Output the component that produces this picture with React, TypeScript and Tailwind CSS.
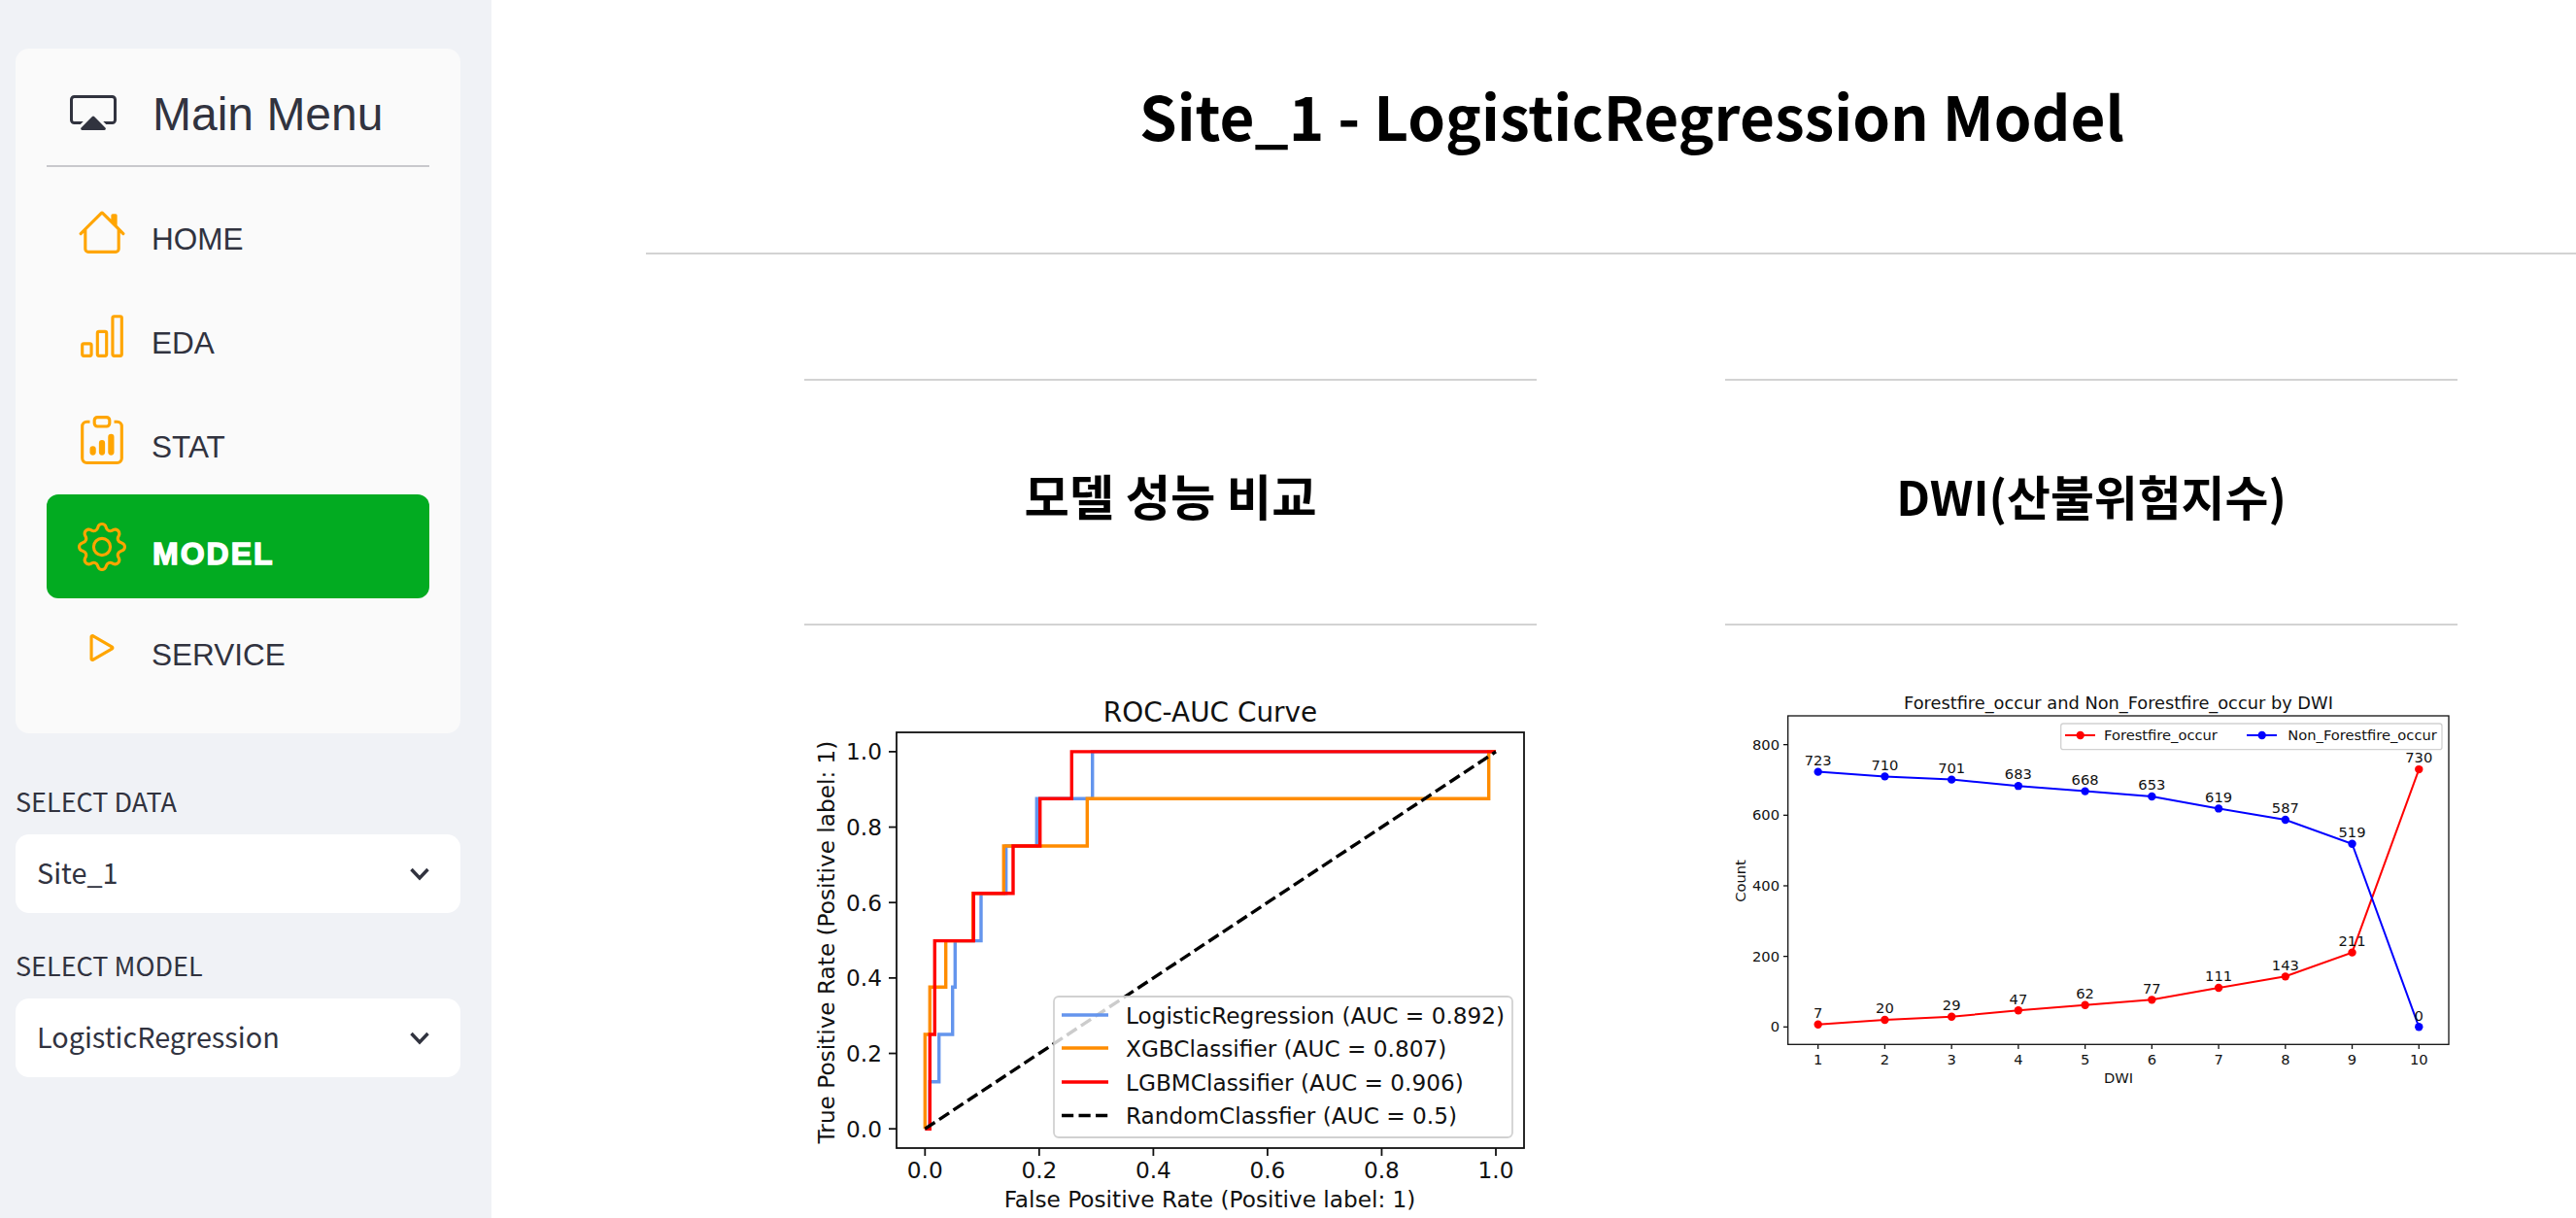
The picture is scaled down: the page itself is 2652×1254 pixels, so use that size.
import React from "react";
import { BsBarChart, BsCast, BsClipboardData, BsGear, BsHouse, BsPlay } from "react-icons/bs";

const rows = [
  { label: "HOME", Icon: BsHouse },
  { label: "EDA", Icon: BsBarChart },
  { label: "STAT", Icon: BsClipboardData },
  { label: "MODEL", Icon: BsGear, active: true },
  { label: "SERVICE", Icon: BsPlay },
];

function NavRow({ label, Icon, active }: { label: string; Icon: any; active?: boolean }) {
  return (
    <div className={active ? "flex h-[107px] gap-[26px] rounded-[12px] bg-[#02ab21] pl-[32px]" : "flex h-[107px] gap-[26px] pl-[32px]"}>
      <Icon className={active ? "mt-[29px] size-[50px] shrink-0 text-[#ffa500]" : "mt-[26px] size-[50px] shrink-0 text-[#ffa500]"} />
      {active ? (
        <span className="mt-[43px] ml-[1px] text-[32px] leading-[37px] font-bold tracking-[2px] text-white [-webkit-text-stroke:1.4px_white]">{label}</span>
      ) : (
        <span className="mt-[40px] text-[31.5px] leading-[37px] text-[#31333f]">{label}</span>
      )}
    </div>
  );
}

function SelectBox({ label, value }: { label: string; value: string }) {
  return (
    <div>
      <div className="mb-[16px] h-[36px] text-[27px] leading-[36px] text-[#31333f]">{label}</div>
      <div className="flex h-[81px] items-center justify-between rounded-[14px] bg-white pr-[32px] pl-[22px]">
        <span className="pb-[4px] text-[28.8px] text-[#31333f]">{value}</span>
        <svg viewBox="0 0 20 14" className="h-[14px] w-[20px]" fill="none" stroke="#31333f" strokeWidth="3.4">
          <polyline points="1.5,2 10,11 18.5,2" />
        </svg>
      </div>
    </div>
  );
}

const zx = (p: number) => 830 + p / 3;
const zy = (p: number) => 700 + p / 2.83;
const pts = (a: number[][]) => a.map(([x, y]) => `${zx(x).toFixed(1)},${zy(y).toFixed(1)}`).join(" ");

const blue = [[367,1308],[382,1308],[382,1171],[410,1171],[410,1033],[452,1033],[452,895],[460,895],[460,760],[540,760],[540,622],[617,622],[617,484],[712,484],[712,346],[884,346],[884,209],[2130,209]];
const orange = [[367,1308],[367,1033],[382,1033],[382,895],[431,895],[431,760],[515,760],[515,622],[610,622],[610,484],[868,484],[868,346],[2108,346],[2108,209],[2130,209]];
const red = [[367,1308],[382,1308],[382,1033],[397,1033],[397,760],[517,760],[517,622],[639,622],[639,484],[722,484],[722,346],[820,346],[820,209],[2130,209]];

function RocChart() {
  const xt = [0, 0.2, 0.4, 0.6, 0.8, 1];
  const X = (v: number) => 952.3 + 587.7 * v;
  const Y = (v: number) => 1162.2 - 388.3 * v;
  const legend = [
    ["#6495ed", "LogisticRegression (AUC = 0.892)", 1045],
    ["#ff8c00", "XGBClassifier (AUC = 0.807)", 1079],
    ["#ff0000", "LGBMClassifier (AUC = 0.906)", 1114],
    ["#000000", "RandomClassfier (AUC = 0.5)", 1148.5],
  ] as [string, string, number][];
  return (
    <svg viewBox="828 700 754 554" className="h-[554px] w-[754px] font-['DejaVu_Sans',sans-serif]" fill="#111">
      <text x="1246" y="743" fontSize="27.9" textAnchor="middle">ROC-AUC Curve</text>
      <polyline points={pts(blue)} fill="none" stroke="#6495ed" strokeWidth="3.4" />
      <polyline points={pts(orange)} fill="none" stroke="#ff8c00" strokeWidth="3.4" />
      <polyline points={pts(red)} fill="none" stroke="#ff0000" strokeWidth="3.4" />
      <line x1={X(0)} y1={Y(0)} x2={X(1)} y2={Y(1)} stroke="#000" strokeWidth="3.4" strokeDasharray="12.2 5.3" />
      <rect x="923" y="754" width="646" height="428" fill="none" stroke="#111" strokeWidth="1.8" />
      {xt.map((v) => (
        <g key={v}>
          <line x1={X(v)} x2={X(v)} y1="1182" y2="1190" stroke="#111" strokeWidth="1.8" />
          <text x={X(v)} y="1213" fontSize="23.2" textAnchor="middle">{v.toFixed(1)}</text>
          <line x1="915" x2="923" y1={Y(v)} y2={Y(v)} stroke="#111" strokeWidth="1.8" />
          <text x="908" y={Y(v) + 8.5} fontSize="23.2" textAnchor="end">{v.toFixed(1)}</text>
        </g>
      ))}
      <rect x="1085" y="1026" width="472" height="145" rx="5" fill="#ffffff" fillOpacity="0.8" stroke="#cccccc" strokeOpacity="0.9" strokeWidth="1.8" />
      {legend.map(([c, t, y]) => (
        <g key={t}>
          <line x1="1093" x2="1141" y1={y} y2={y} stroke={c} strokeWidth="3.4" strokeDasharray={c === "#000000" ? "12.2 5.3" : undefined} />
          <text x="1159" y={y + 8.5} fontSize="23.2">{t}</text>
        </g>
      ))}
      <text x="1245.5" y="1243" fontSize="23.2" textAnchor="middle">False Positive Rate (Positive label: 1)</text>
      <text transform="translate(859 970) rotate(-90)" fontSize="23.2" textAnchor="middle">True Positive Rate (Positive label: 1)</text>
    </svg>
  );
}

const redData = [7, 20, 29, 47, 62, 77, 111, 143, 211, 730];
const blueData = [723, 710, 701, 683, 668, 653, 619, 587, 519, 0];

function DwiChart() {
  const X = (d: number) => 1871.7 + 68.73 * (d - 1);
  const Y = (v: number) => 1057.3 - 0.3633 * v;
  const line = (a: number[]) => a.map((v, i) => `${X(i + 1).toFixed(1)},${Y(v).toFixed(1)}`).join(" ");
  return (
    <svg viewBox="1776 700 754 554" className="h-[554px] w-[754px] font-['DejaVu_Sans',sans-serif]" fill="#111">
      <text x="2181" y="730" fontSize="17.8" textAnchor="middle">Forestfire_occur and Non_Forestfire_occur by DWI</text>
      <rect x="1840.7" y="737" width="680.3" height="338.3" fill="none" stroke="#111" strokeWidth="1.3" />
      {[0, 200, 400, 600, 800].map((v) => (
        <g key={v}>
          <line x1="1836" x2="1840.7" y1={Y(v)} y2={Y(v)} stroke="#111" strokeWidth="1.3" />
          <text x="1832" y={Y(v) + 5} fontSize="14.7" textAnchor="end">{v}</text>
        </g>
      ))}
      {redData.map((_, i) => (
        <g key={i}>
          <line x1={X(i + 1)} x2={X(i + 1)} y1="1075.3" y2="1080" stroke="#111" strokeWidth="1.3" />
          <text x={X(i + 1)} y="1096" fontSize="14.7" textAnchor="middle">{i + 1}</text>
        </g>
      ))}
      <polyline points={line(redData)} fill="none" stroke="#ff0000" strokeWidth="2" />
      <polyline points={line(blueData)} fill="none" stroke="#0000ff" strokeWidth="2" />
      {redData.map((v, i) => (
        <circle key={i} cx={X(i + 1)} cy={Y(v)} r="4.2" fill="#ff0000" />
      ))}
      {blueData.map((v, i) => (
        <circle key={i} cx={X(i + 1)} cy={Y(v)} r="4.2" fill="#0000ff" />
      ))}
      {redData.map((v, i) => (
        <text key={i} x={X(i + 1)} y={Y(v) - 6.7} fontSize="14.7" textAnchor="middle">{v}</text>
      ))}
      {blueData.map((v, i) => (
        <text key={i} x={X(i + 1)} y={Y(v) - 6.7} fontSize="14.7" textAnchor="middle">{v}</text>
      ))}
      <rect x="2121.7" y="745" width="392.3" height="26.7" rx="2.5" fill="#ffffff" fillOpacity="0.8" stroke="#cccccc" strokeOpacity="0.9" strokeWidth="1.3" />
      <line x1="2126" x2="2157" y1="757" y2="757" stroke="#ff0000" strokeWidth="2" />
      <circle cx="2141.7" cy="757" r="4.2" fill="#ff0000" />
      <text x="2166" y="762" fontSize="14.7">Forestfire_occur</text>
      <line x1="2313" x2="2344" y1="757" y2="757" stroke="#0000ff" strokeWidth="2" />
      <circle cx="2328.7" cy="757" r="4.2" fill="#0000ff" />
      <text x="2355.3" y="762" fontSize="14.7">Non_Forestfire_occur</text>
      <text x="2181" y="1115.3" fontSize="14.7" textAnchor="middle">DWI</text>
      <text transform="translate(1797 907) rotate(-90)" fontSize="14.7" textAnchor="middle">Count</text>
    </svg>
  );
}

export default function App() {
  return (
    <div className="flex h-screen w-full overflow-hidden bg-white font-['Noto_Sans_CJK_KR',sans-serif]">
      <aside className="w-[506px] shrink-0 bg-[#f0f2f6] pt-[50px] pr-[32px] pl-[16px]">
        <div className="h-[705px] rounded-[14px] bg-[#fafafa] px-[32px] font-['Liberation_Sans',sans-serif]">
          <div className="flex h-[120px] gap-[37px] pl-[24px]">
            <BsCast className="mt-[42px] size-[48px] shrink-0 text-[#31333f]" />
            <span className="mt-[40px] text-[48px] leading-[55px] text-[#31333f]">Main Menu</span>
          </div>
          <div className="mb-[16px] h-[2px] bg-[#c8c8cc]" />
          {rows.map((r) => (
            <NavRow key={r.label} {...r} />
          ))}
        </div>
        <div className="mt-[52px] flex flex-col gap-[36px]">
          <SelectBox label="SELECT DATA" value="Site_1" />
          <SelectBox label="SELECT MODEL" value="LogisticRegression" />
        </div>
      </aside>
      <main className="min-w-0 flex-1 pt-[78px] pl-[159px] text-black">
        <h1 className="h-[80px] pl-[43px] text-center text-[62px] leading-[80px] font-semibold whitespace-nowrap">Site_1 - LogisticRegression Model</h1>
        <div className="mt-[102px] h-[2px] bg-[#d3d3d3]" />
        <div className="mt-[128px] flex gap-[194px] pl-[163px]">
          <section className="w-[754px] shrink-0">
            <div className="h-[2px] bg-[#d3d3d3]" />
            <h2 className="mt-[84px] h-[68px] text-center text-[50.4px] leading-[68px] font-semibold">모델 성능 비교</h2>
            <div className="mt-[98px] mb-[56px] h-[2px] bg-[#d3d3d3]" />
            <RocChart />
          </section>
          <section className="w-[754px] shrink-0">
            <div className="h-[2px] bg-[#d3d3d3]" />
            <h2 className="mt-[84px] h-[68px] text-center text-[48.8px] leading-[68px] font-semibold">DWI(산불위험지수)</h2>
            <div className="mt-[98px] mb-[56px] h-[2px] bg-[#d3d3d3]" />
            <DwiChart />
          </section>
        </div>
      </main>
    </div>
  );
}
